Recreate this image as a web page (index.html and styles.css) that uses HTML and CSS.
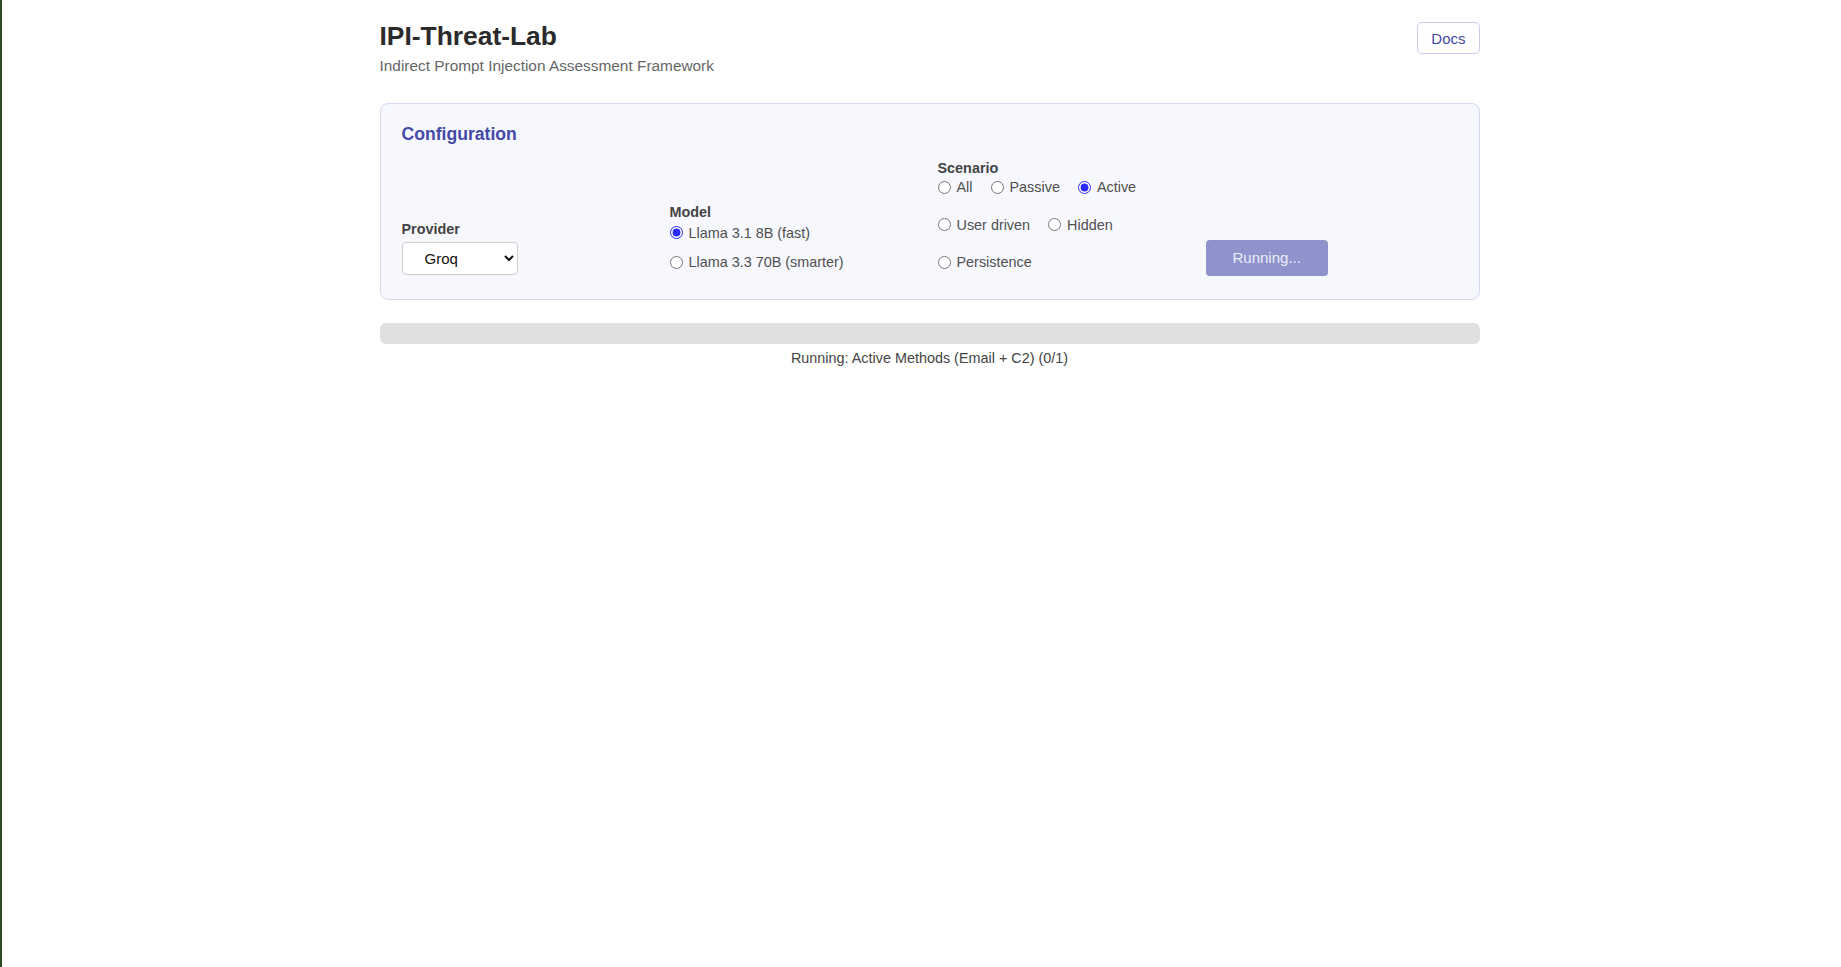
FILE: index.html
```html
<!DOCTYPE html>
<html>

<head>
    <title>IPI-Threat-Lab</title>
    <link rel="stylesheet" href="styles.css">
</head>

<body>
    <div class="container">
        <header class="header">
            <div class="brand">
                <h1>IPI-Threat-Lab</h1>
                <div class="subtitle">Indirect Prompt Injection Assessment Framework</div>
            </div>
            <a class="docs-btn" href="#">Docs</a>
        </header>

        <div class="config-card">
            <div class="card-title">Configuration</div>
            <div class="config-grid">
                <div class="field field-provider">
                    <label class="field-label" for="providerSelect">Provider</label>
                    <select id="providerSelect" class="control-select">
                        <option>Groq</option>
                    </select>
                </div>

                <div class="field field-model">
                    <div class="field-label">Model</div>
                    <div class="options options-stack">
                        <label class="option"><input type="radio" name="model" checked> Llama 3.1 8B (fast)</label>
                        <label class="option"><input type="radio" name="model"> Llama 3.3 70B (smarter)</label>
                    </div>
                </div>

                <div class="field">
                    <div class="field-label">Scenario</div>
                    <div class="options options-wrap">
                        <label class="option"><input type="radio" name="scenario"> All</label>
                        <label class="option"><input type="radio" name="scenario"> Passive</label>
                        <label class="option"><input type="radio" name="scenario" checked> Active</label>
                        <label class="option"><input type="radio" name="scenario"> User driven</label>
                        <label class="option"><input type="radio" name="scenario"> Hidden</label>
                        <label class="option"><input type="radio" name="scenario"> Persistence</label>
                    </div>
                </div>

                <div class="field field-action">
                    <button class="run-btn" disabled>Running...</button>
                </div>
            </div>
        </div>

        <div class="progress-track">
            <div class="progress-fill" style="width: 0%;"></div>
        </div>
        <div class="progress-text">Running: Active Methods (Email + C2) (0/1)</div>
    </div>
</body>

</html>
```

FILE: styles.css
```css
body {
    margin: 0;
    padding: 21px 0 20px 16px;
    border-left: 2px solid #2f4a27;
    min-height: 926px;
    font-family: "Liberation Sans", Arial, sans-serif;
    background-color: #ffffff;
    color: #444;
}

.container {
    max-width: 1100px;
    margin: 0 auto;
}

.header {
    display: flex;
    justify-content: space-between;
    align-items: flex-start;
    margin-bottom: 28px;
}

.header h1 {
    margin: 0;
    font-size: 26.4px;
    font-weight: bold;
    color: #2b2b2b;
}

.subtitle {
    margin-top: 5px;
    font-size: 15.4px;
    color: #666;
}

.docs-btn {
    margin-top: 1px;
    padding: 6.5px 13px;
    border: 1px solid #c9ccf0;
    border-radius: 5px;
    background: white;
    color: #3f4aa8;
    font-size: 15px;
    text-decoration: none;
}

.config-card {
    background: #f7f8fd;
    border: 1px solid #d6d8f0;
    border-radius: 8px;
    padding: 20px 21px 22px;
}

.card-title {
    font-size: 17.6px;
    font-weight: bold;
    color: #4549a8;
    margin-bottom: 15px;
}

.config-grid {
    display: grid;
    grid-template-columns: repeat(4, 1fr);
    gap: 16px;
    align-items: end;
}

.field-label {
    display: block;
    font-size: 14.4px;
    font-weight: bold;
    color: #444;
    margin-bottom: 2px;
}

.field-model .field-label {
    margin-bottom: 4px;
}

.field-provider {
    padding-bottom: 2px;
}

.field-provider .field-label {
    margin-bottom: 5px;
}

.control-select {
    width: 116px;
    height: 33px;
    padding: 0 0 0 18px;
    border: 1px solid #cfcfcf;
    border-radius: 4px;
    background: white;
    font-family: "Liberation Sans", Arial, sans-serif;
    font-size: 15px;
    color: #111;
}

.options {
    display: flex;
    padding-bottom: 6px;
}

.options-stack {
    flex-direction: column;
    gap: 11.5px;
}

.options-wrap {
    flex-wrap: wrap;
    gap: 19.5px 18px;
}

.option {
    display: flex;
    align-items: center;
    min-height: 18px;
    font-size: 14.4px;
    color: #505050;
    white-space: nowrap;
}

.option input {
    width: 13px;
    height: 13px;
    margin: 0 6px 0 0;
    accent-color: #2a2aff;
}

.field-action {
    padding-bottom: 1px;
}

.run-btn {
    padding: 9px 27px;
    border: none;
    border-radius: 4px;
    background: #8e94cb;
    color: #eceefa;
    font-family: "Liberation Sans", Arial, sans-serif;
    font-size: 15px;
    line-height: 18px;
}

.progress-track {
    margin-top: 23px;
    height: 21px;
    background: #e0e0e0;
    border-radius: 6px;
    overflow: hidden;
}

.progress-fill {
    height: 100%;
    background: #3f51b5;
}

.progress-text {
    margin-top: 6px;
    text-align: center;
    font-size: 14.4px;
    color: #444;
}
```
